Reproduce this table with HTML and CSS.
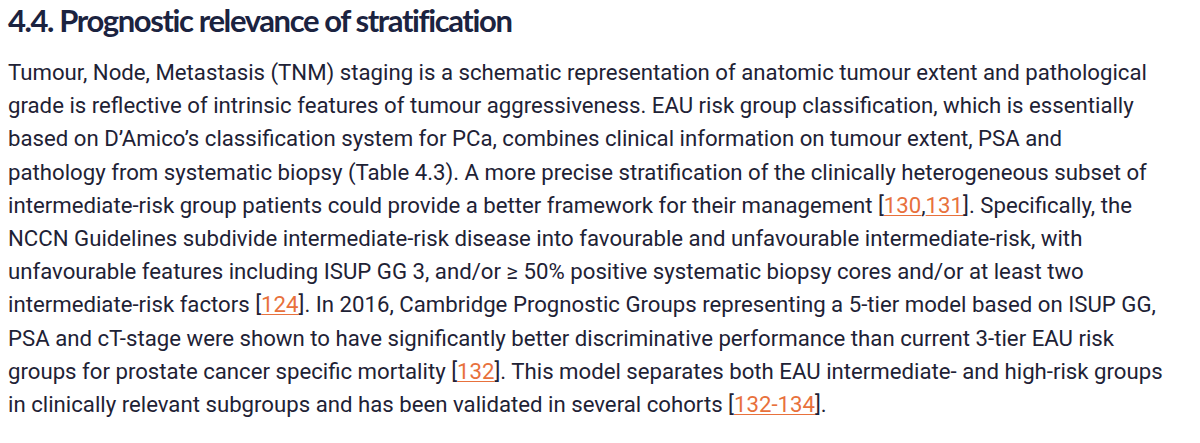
FILE: index.html
```html
<!DOCTYPE html>
<html>
<head>
<meta charset="utf-8">
<link rel="stylesheet" href="styles.css">
</head>
<body>
<main class="section">
<h2 class="section-title">4.4. Prognostic relevance of stratification</h2>
<p class="body-text">Tumour, Node, Metastasis (TNM) staging is a schematic representation of anatomic tumour extent and pathological<br>
grade is reflective of intrinsic features of tumour aggressiveness. EAU risk group classification, which is essentially<br>
based on D’Amico’s classification system for PCa, combines clinical information on tumour extent, PSA and<br>
pathology from systematic biopsy (Table 4.3). A more precise stratification of the clinically heterogeneous subset of<br>
intermediate-risk group patients could provide a better framework for their management [<a class="ref" href="#">130</a>,<a class="ref" href="#">131</a>]. Specifically, the<br>
NCCN Guidelines subdivide intermediate-risk disease into favourable and unfavourable intermediate-risk, with<br>
unfavourable features including ISUP GG 3, and/or ≥ 50% positive systematic biopsy cores and/or at least two<br>
intermediate-risk factors [<a class="ref" href="#">124</a>]. In 2016, Cambridge Prognostic Groups representing a 5-tier model based on ISUP GG,<br>
PSA and cT-stage were shown to have significantly better discriminative performance than current 3-tier EAU risk<br>
groups for prostate cancer specific mortality [<a class="ref" href="#">132</a>]. This model separates both EAU intermediate- and high-risk groups<br>
in clinically relevant subgroups and has been validated in several cohorts [<a class="ref" href="#">132-134</a>].</p>
</main>
</body>
</html>
```
FILE: styles.css
```css
html, body {
  margin: 0;
  padding: 0;
  background: #ffffff;
}
.section {
  padding: 0 8px;
  width: 1190px;
  box-sizing: border-box;
}
.section-title {
  margin: 0;
  font-family: Lato, "Open Sans", sans-serif;
  font-weight: 700;
  font-size: 31px;
  letter-spacing: -1.4px;
  line-height: 40px;
  color: #1b2340;
}
.body-text {
  margin: 16px 0 0 0;
  font-family: Roboto, "Liberation Sans", sans-serif;
  font-size: 22.2px;
  line-height: 33.2px;
  color: #1e2235;
  white-space: nowrap;
}
.ref {
  color: #e8713c;
  text-decoration: underline;
  text-decoration-thickness: 1px;
  text-underline-offset: 2px;
}
```
